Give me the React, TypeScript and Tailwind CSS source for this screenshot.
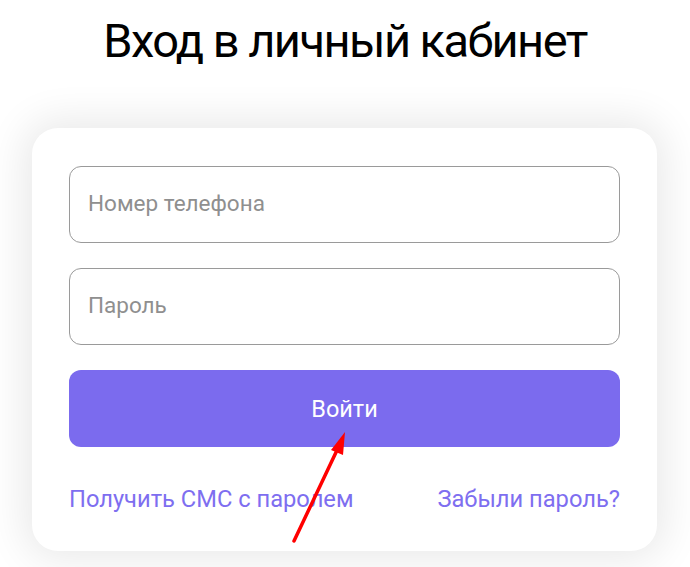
import type { ReactNode } from 'react';

function Field({ children }: { children: ReactNode }) {
  return (
    <div className="flex h-[77px] items-center rounded-[12px] border border-[#9a9a9a] px-[18px] pb-[2px] text-[22.5px] text-[#8f8f8f]">
      {children}
    </div>
  );
}

export default function App() {
  return (
    <div
      className="relative min-h-[567px] overflow-hidden bg-white"
      style={{ fontFamily: 'Roboto, "Noto Sans", sans-serif' }}
    >
      <h1 className="pt-[13px] text-center text-[47px] leading-[56px] font-normal tracking-[-1.55px] text-black">
        Вход в личный кабинет
      </h1>

      <div className="mx-[32px] mt-[59px] w-[625px] rounded-[26px] bg-white px-[37px] pt-[38px] pb-[36px] shadow-[0_0_40px_8px_rgba(0,0,0,0.09)]">
        <div className="flex flex-col gap-[25px]">
          <Field>Номер телефона</Field>
          <Field>Пароль</Field>
          <button
            type="button"
            className="flex h-[77px] items-center justify-center rounded-[12px] bg-[#7b6bee] pt-[3px] text-[23.5px] text-white"
          >
            Войти
          </button>
        </div>
        <div className="mt-[36px] flex items-center justify-between text-[23.7px] leading-[32px] text-[#7e6ef0]">
          <a href="#">Получить СМС с паролем</a>
          <a href="#">Забыли пароль?</a>
        </div>
      </div>

      {/* стрелка поверх формы */}
      <svg
        className="pointer-events-none absolute left-0 top-0"
        width="690"
        height="567"
        viewBox="0 0 690 567"
      >
        <line x1="294" y1="541" x2="339" y2="446" stroke="#ff0000" strokeWidth="3.5" strokeLinecap="round" />
        <polygon points="345,432 331,450 343,455" fill="#ff0000" />
      </svg>
    </div>
  );
}
